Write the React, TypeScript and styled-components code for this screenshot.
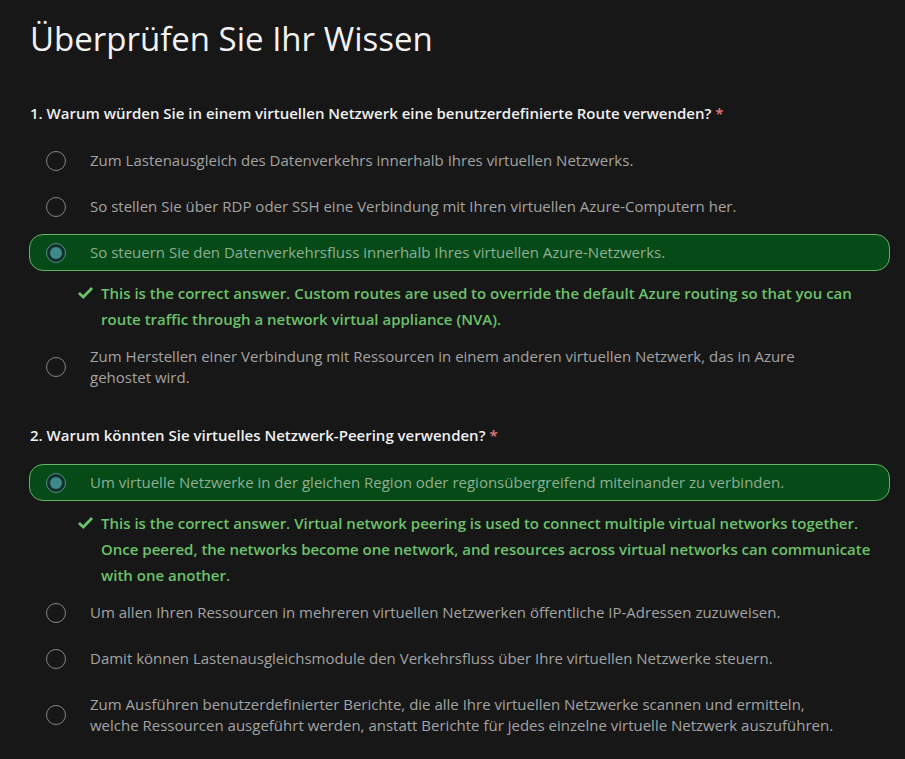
import React from "react";
import styled, { createGlobalStyle } from "styled-components";

const Global = createGlobalStyle`
  html, body { margin: 0; padding: 0; background: #171717; }
  body { font-family: "Open Sans", "Noto Sans", sans-serif; }
`;

const Page = styled.main`
  background: #171717;
  min-height: 759px;
  padding: 16px 15px 20px 29px;
  box-sizing: border-box;
`;

const Title = styled.h1`
  margin: 0 0 0 1px;
  font-size: 33px;
  font-weight: 400;
  line-height: 46px;
  color: #f2f2f2;
`;

const Question = styled.section<{ $first?: boolean }>`
  margin-top: ${(p) => (p.$first ? "41px" : "20px")};
  display: flex;
  flex-direction: column;
`;

const QuestionTitle = styled.h2`
  margin: 0 0 19px 1px;
  font-size: 15px;
  font-weight: 600;
  line-height: 20px;
  color: #f0f0f0;
`;

const Star = styled.span`
  color: #e37d7d;
  margin-left: 4px;
`;

const OptionRow = styled.label<{ $selected?: boolean }>`
  display: flex;
  align-items: center;
  gap: 24px;
  box-sizing: border-box;
  min-height: 37px;
  padding: 7px 16px;
  margin-bottom: 9px;
  border-radius: 14px;
  border: 1px solid ${(p) => (p.$selected ? "#62b462" : "transparent")};
  background: ${(p) => (p.$selected ? "#054a17" : "transparent")};
`;

const Radio = styled.span<{ $selected?: boolean }>`
  flex: none;
  width: 20px;
  height: 20px;
  border-radius: 50%;
  box-sizing: border-box;
  display: flex;
  align-items: center;
  justify-content: center;
  border: ${(p) => (p.$selected ? "1px solid #4f8f8a" : "1.5px solid #858585")};
  background: ${(p) => (p.$selected ? "#13312a" : "transparent")};
  &::after {
    content: "";
    display: ${(p) => (p.$selected ? "block" : "none")};
    width: 12px;
    height: 12px;
    border-radius: 50%;
    background: #3f8a89;
  }
`;

const OptionText = styled.span<{ $selected?: boolean }>`
  font-size: 15px;
  line-height: 21px;
  color: ${(p) => (p.$selected ? "#8fae93" : "#a3a3a3")};
`;

const Feedback = styled.div`
  display: flex;
  align-items: flex-start;
  gap: 7px;
  padding: 0 20px 0 48px;
  margin-bottom: 6px;
  color: #6cc26a;
  font-size: 15px;
  font-weight: 600;
  line-height: 26px;
`;

const CheckIcon = styled.svg`
  flex: none;
  width: 17px;
  height: 17px;
  margin-top: 4px;
`;

const Line = styled.span`
  display: block;
  white-space: nowrap;
`;

type Opt = { text: string[]; selected?: boolean; feedback?: string[] };

const q1: Opt[] = [
  { text: ["Zum Lastenausgleich des Datenverkehrs innerhalb Ihres virtuellen Netzwerks."] },
  { text: ["So stellen Sie über RDP oder SSH eine Verbindung mit Ihren virtuellen Azure-Computern her."] },
  {
    text: ["So steuern Sie den Datenverkehrsfluss innerhalb Ihres virtuellen Azure-Netzwerks."],
    selected: true,
    feedback: [
      "This is the correct answer. Custom routes are used to override the default Azure routing so that you can",
      "route traffic through a network virtual appliance (NVA).",
    ],
  },
  {
    text: [
      "Zum Herstellen einer Verbindung mit Ressourcen in einem anderen virtuellen Netzwerk, das in Azure",
      "gehostet wird.",
    ],
  },
];

const q2: Opt[] = [
  {
    text: ["Um virtuelle Netzwerke in der gleichen Region oder regionsübergreifend miteinander zu verbinden."],
    selected: true,
    feedback: [
      "This is the correct answer. Virtual network peering is used to connect multiple virtual networks together.",
      "Once peered, the networks become one network, and resources across virtual networks can communicate",
      "with one another.",
    ],
  },
  { text: ["Um allen Ihren Ressourcen in mehreren virtuellen Netzwerken öffentliche IP-Adressen zuzuweisen."] },
  { text: ["Damit können Lastenausgleichsmodule den Verkehrsfluss über Ihre virtuellen Netzwerke steuern."] },
  {
    text: [
      "Zum Ausführen benutzerdefinierter Berichte, die alle Ihre virtuellen Netzwerke scannen und ermitteln,",
      "welche Ressourcen ausgeführt werden, anstatt Berichte für jedes einzelne virtuelle Netzwerk auszuführen.",
    ],
  },
];

function Check() {
  return (
    <CheckIcon viewBox="0 0 16 16" aria-hidden>
      <path d="M1.8 8.4 L5.9 12.2 L14.2 3.8" fill="none" stroke="#6cc26a" strokeWidth="2.6" strokeLinecap="butt" strokeLinejoin="miter" />
    </CheckIcon>
  );
}

function Options({ items }: { items: Opt[] }) {
  return (
    <>
      {items.map((o, i) => (
        <React.Fragment key={i}>
          <OptionRow $selected={o.selected}>
            <Radio $selected={o.selected} />
            <OptionText $selected={o.selected}>
              {o.text.map((t, j) => (
                <Line key={j}>{t}</Line>
              ))}
            </OptionText>
          </OptionRow>
          {o.feedback && (
            <Feedback>
              <Check />
              <div>
                {o.feedback.map((t, j) => (
                  <Line key={j}>{t}</Line>
                ))}
              </div>
            </Feedback>
          )}
        </React.Fragment>
      ))}
    </>
  );
}

export default function App() {
  return (
    <>
      <Global />
      <Page>
        <Title>Überprüfen Sie Ihr Wissen</Title>
        <Question $first>
          <QuestionTitle>
            1. Warum würden Sie in einem virtuellen Netzwerk eine benutzerdefinierte Route verwenden?<Star>*</Star>
          </QuestionTitle>
          <Options items={q1} />
        </Question>
        <Question>
          <QuestionTitle>
            2. Warum könnten Sie virtuelles Netzwerk-Peering verwenden?<Star>*</Star>
          </QuestionTitle>
          <Options items={q2} />
        </Question>
      </Page>
    </>
  );
}
